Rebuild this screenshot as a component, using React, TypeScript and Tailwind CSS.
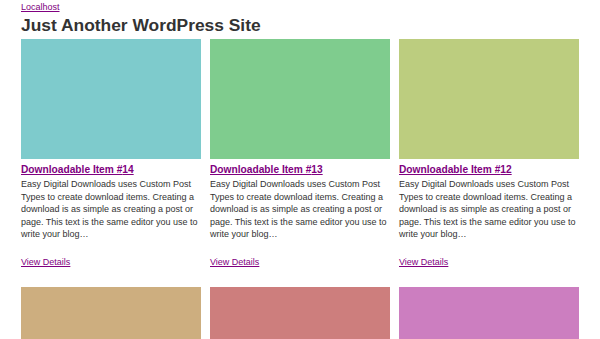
const items = [
  { id: 14, color: "bg-[#7ecbcc]" },
  { id: 13, color: "bg-[#7fcc8e]" },
  { id: 12, color: "bg-[#bccd7f]" },
  { id: 11, color: "bg-[#cdae7f]" },
  { id: 10, color: "bg-[#cd7e7d]" },
  { id: 9, color: "bg-[#cc7ec0]" },
];

const excerpt =
  "Easy Digital Downloads uses Custom Post Types to create download items. Creating a download is as simple as creating a post or page. This text is the same editor you use to write your blog…";

const DownloadCard = ({ id, color }: { id: number; color: string }) => (
  <div className="flex flex-col">
    <div className={`h-[120px] w-[180px] ${color}`} />
    <a href="#" className="mt-[4px] text-[10.2px] font-bold leading-[14px] text-[#800080] underline">
      Downloadable Item #{id}
    </a>
    <p className="mt-[1px] text-[9px] leading-[12.5px] text-[#333]">{excerpt}</p>
    <a href="#" className="mt-[15px] text-[9px] leading-[12.5px] text-[#800080] underline">
      View Details
    </a>
  </div>
);

export default function App() {
  return (
    <div className="h-[339px] overflow-hidden bg-white pl-[21px] pt-[1px] font-['Liberation_Sans',Arial,sans-serif]">
      <a href="#" className="block text-[9px] leading-[12px] text-[#800080] underline">
        Localhost
      </a>
      <h1 className="mt-[2px] text-[17.4px] font-bold leading-[20px] text-[#333]">
        Just Another WordPress Site
      </h1>
      <div className="mt-[4px] grid w-[558px] grid-cols-[180px_180px_180px] gap-x-[9px] gap-y-[19px]">
        {items.map((item) => (
          <DownloadCard key={item.id} id={item.id} color={item.color} />
        ))}
      </div>
    </div>
  );
}
